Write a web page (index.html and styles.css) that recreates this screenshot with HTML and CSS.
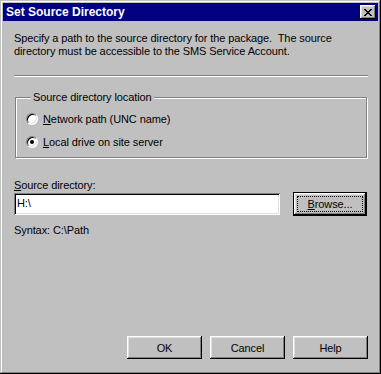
FILE: index.html
```html
<!DOCTYPE html>
<html lang="en">
<head>
    <meta charset="UTF-8">
    <meta name="viewport" content="width=device-width, initial-scale=1.0">
    <title>Set Source Directory</title>
    <link rel="stylesheet" href="styles.css">
</head>
<body>

    <div class="window">
        <div class="titlebar">
            <span class="title">Set Source Directory</span>
            <button class="close" aria-label="Close">
                <svg width="8" height="7" viewBox="0 0 8 7"><path d="M0 0h2v1h1v1h2V1h1V0h2v1H7v1H6v1H5v1h1v1h1v1h1v1H6V6H5V5H3v1H2v1H0V6h1V5h1V4h1V3H2V2H1V1H0z" fill="#000"/></svg>
            </button>
        </div>

        <div class="content">
            <p class="intro">Specify a path to the source directory for the package.&nbsp; The source<br>directory must be accessible to the SMS Service Account.</p>

            <div class="sep"></div>

            <fieldset class="group">
                <legend>Source directory location</legend>
                <label class="radio"><span class="radio-box"></span><span><u>N</u>etwork path (UNC name)</span></label>
                <label class="radio"><span class="radio-box checked"></span><span><u>L</u>ocal drive on site server</span></label>
            </fieldset>

            <div class="field-label"><u>S</u>ource directory:</div>
            <div class="field-row">
                <div class="edit">H:\</div>
                <button class="btn default"><span class="focus"><u>B</u>rowse...</span></button>
            </div>
            <div class="syntax">Syntax: C:\Path</div>

            <div class="actions">
                <button class="btn">OK</button>
                <button class="btn">Cancel</button>
                <button class="btn">Help</button>
            </div>
        </div>
    </div>

</body>
</html>
```

FILE: styles.css
```css
* {
    margin: 0;
    padding: 0;
    box-sizing: border-box;
}
body {
    font-family: "Liberation Sans", Arial, sans-serif;
    font-size: 11px;
    letter-spacing: -0.1px;
    background-color: #c0c0c0;
    width: 381px;
    height: 374px;
    overflow: hidden;
}
.window {
    width: 381px;
    height: 374px;
    padding: 3px;
    background-color: #c0c0c0;
    box-shadow: inset -1px -1px #000, inset 1px 1px #c0c0c0, inset -2px -2px #808080, inset 2px 2px #fff;
    display: flex;
    flex-direction: column;
}
.titlebar {
    height: 18px;
    background-color: #000080;
    display: flex;
    align-items: center;
    justify-content: space-between;
    padding: 0 2px 0 3px;
}
.title {
    color: #fff;
    font-weight: bold;
    font-size: 12px;
    letter-spacing: 0;
}
.close {
    width: 16px;
    height: 14px;
    background-color: #c0c0c0;
    border: none;
    display: flex;
    align-items: center;
    justify-content: center;
    box-shadow: inset -1px -1px #000, inset 1px 1px #fff, inset -2px -2px #808080, inset 2px 2px #dfdfdf;
}
.close svg {
    display: block;
    margin-left: -1px;
}
.content {
    flex: 1;
    display: flex;
    flex-direction: column;
    padding: 11px 10px 12px 11px;
    color: #000;
}
.intro {
    line-height: 13px;
}
.sep {
    height: 2px;
    margin: 17px 0 0 0;
    border-top: 1px solid #808080;
    border-bottom: 1px solid #fff;
}
.group {
    margin: 14px 1px 0 1px;
    height: 67px;
    border: 1px solid #808080;
    box-shadow: inset 1px 1px #fff, 1px 1px #fff;
    padding: 8px 0 0 10px;
}
.group legend {
    margin-left: 5px;
    padding: 0 2px 0 2px;
    background-color: #c0c0c0;
    line-height: 12px;
}
.radio {
    display: flex;
    align-items: center;
    gap: 5px;
    height: 16px;
    margin-bottom: 7px;
}
.radio-box {
    width: 12px;
    height: 12px;
    border-radius: 50%;
    background-color: #fff;
    border: 1px solid;
    border-color: #808080 #fff #fff #808080;
    box-shadow: inset 1px 1px #000, inset -1px -1px #dfdfdf;
    display: flex;
    align-items: center;
    justify-content: center;
}
.radio-box.checked::after {
    content: "";
    width: 4px;
    height: 4px;
    border-radius: 50%;
    background-color: #000;
}
.field-label {
    margin-top: 21px;
    line-height: 13px;
}
.field-row {
    display: flex;
    align-items: center;
    gap: 13px;
}
.edit {
    width: 266px;
    height: 22px;
    background-color: #fff;
    padding: 4px 0 0 3px;
    box-shadow: inset 1px 1px #808080, inset -1px -1px #fff, inset 2px 2px #000, inset -2px -2px #dfdfdf;
}
.btn {
    width: 75px;
    height: 23px;
    font-family: inherit;
    font-size: 11px;
    letter-spacing: inherit;
    color: #000;
    background-color: #c0c0c0;
    border: none;
    box-shadow: inset -1px -1px #000, inset 1px 1px #fff, inset -2px -2px #808080, inset 2px 2px #dfdfdf;
}
.btn.default {
    width: 74px;
    height: 24px;
    border: 1px solid #000;
    padding: 3px;
    display: flex;
}
.focus {
    flex: 1;
    border: 1px dotted #000;
    display: flex;
    align-items: center;
    justify-content: center;
}
.syntax {
    margin-top: 8px;
    line-height: 13px;
}
.actions {
    margin-top: auto;
    display: flex;
    justify-content: flex-end;
    gap: 8px;
}
```
